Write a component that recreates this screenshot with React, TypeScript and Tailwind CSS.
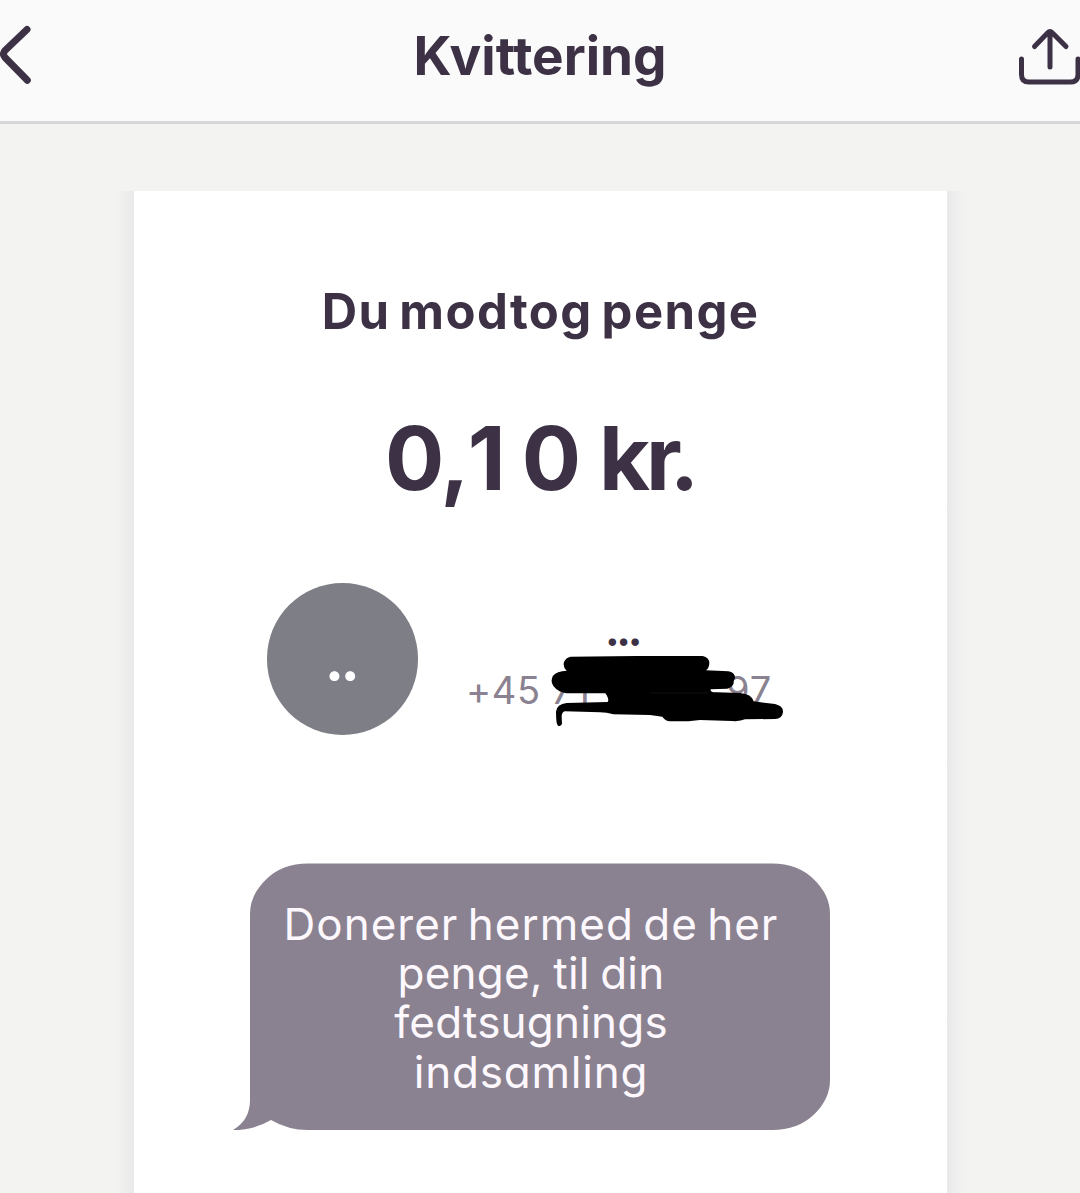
const inter = "font-['Inter',sans-serif] [font-feature-settings:'cv11'] whitespace-nowrap";

function BackIcon() {
  return (
    <svg className="block h-[70px] w-10" viewBox="0 0 40 70" fill="none" stroke="#3d3145" strokeWidth="7" strokeLinecap="round" strokeLinejoin="round">
      <path d="M27 9.500L5 30.500Q2 34 5 37.500L27.300 60.300" />
    </svg>
  );
}

function ShareIcon() {
  return (
    <svg className="block h-[70px] w-[66px]" viewBox="0 0 66 70" fill="none" stroke="#3d3145" strokeWidth="5" strokeLinecap="round" strokeLinejoin="round">
      <path d="M7.500 39V54.500Q7.500 62 15 62H56.500Q64 62 64 54.500V39" />
      <path d="M36 47V12M20.500 26.500L33.500 13Q36 10.500 38.500 13L52 26.500" />
    </svg>
  );
}

function Scribble() {
  return (
    <svg className="absolute -left-[16px] -top-[9px] h-[120px] w-[350px]" viewBox="0 0 1050 360">
      <path d="M362 110L560 108H758Q778 112 778 130Q778 144 768 151L835 154Q856 158 855 174Q850 180 851 190Q847 203 832 206L782 208Q780 218 800 217L870 219Q905 222 911 244L975 252Q1000 258 999 276Q997 296 975 297L885 298Q870 305 845 303L750 300L715 304H660Q645 302 637 290L600 285L490 283Q470 277 450 277L345 274Q335 276 335 290L336 312Q332 320 324 317Q318 313 318 275Q320 252 350 249L473 246Q478 240 470 226L466 220L350 220Q326 218 310 198Q300 184 309 167Q320 154 350 152Q338 142 342 126Q347 113 362 110Z" />
      <path d="M600 219H776" stroke="#353535" strokeWidth="1" />
    </svg>
  );
}

function Bubble() {
  return (
    <div className="relative ml-[116px] mt-[128px] h-[267px] w-[580px] text-center text-[44px] font-normal leading-[49.2px] text-[#fdf8fd]">
      <svg className="absolute -left-[17px] top-0 h-[267px] w-[597px]" viewBox="233 863 597 267" fill="#8a8290">
        <path d="M308 863.500H772Q798 863.500 814 879.500Q830 895 830 914V1080Q830 1099 814 1114.500Q798 1130 772 1130H308Q288 1130 271 1120Q254 1130 233 1130Q250 1120 250 1100V914Q250 895 266 879.500Q282 863.500 308 863.500Z" />
      </svg>
      <div className="relative flex w-[562px] flex-col items-center pt-[37px]">
        <span className="tracking-[1px] [word-spacing:-4px]">Donerer hermed de her</span>
        <span className="tracking-[0.2px] [word-spacing:-2px]">penge, til din</span>
        <span className="tracking-[0.2px]">fedtsugnings</span>
        <span className="tracking-[0.8px]">indsamling</span>
      </div>
    </div>
  );
}

export default function App() {
  return (
    <div className={`h-[1193px] w-[1080px] overflow-hidden bg-[#f3f3f2] text-[#3d3145] ${inter}`}>
      <header className="flex h-[124px] items-start justify-between border-b-[3px] border-[#d7d7da] bg-[#fafafb] pt-5">
        <div className="w-[66px]"><BackIcon /></div>
        <h1 className="text-[53px] font-bold leading-[72px] tracking-[0px]">Kvittering</h1>
        <div className="w-[66px]"><ShareIcon /></div>
      </header>
      <div className="flex pt-[67px]">
        <div className="ml-[116px] h-[1010px] w-[18px] bg-gradient-to-r from-[#f3f3f2] to-[#e9e9e9]" />
        <main className="h-[1010px] w-[813px] bg-white">
          <h2 className="pt-[91px] text-center text-[49px] font-bold leading-[60px] tracking-[1.4px] [word-spacing:-4px]">Du modtog penge</h2>
          <p className="ml-[251px] mt-[66px] text-[88px] font-bold leading-[100px] [word-spacing:-3px]">
            <span className="tracking-[-4px]">0</span>
            <span className="tracking-[-2px]">,</span>
            <span className="tracking-[16px]">1</span>
            <span>0 </span>
            <span className="tracking-[-4px]">k</span>
            <span className="tracking-[-12px]">r</span>
            <span>.</span>
          </p>
          <section className="ml-[133px] mt-[75px] flex h-[152px]">
            <div className="flex h-[152px] w-[151px] justify-center rounded-full bg-[#7d7e86] pt-[46px] pr-[4px] text-[58px] font-bold leading-[60px] tracking-[-3.5px] text-white">..</div>
            <div className="relative ml-12 mt-[36px] w-[320px]">
              <div className="w-[312px] text-center text-[44px] font-bold leading-[22px] tracking-[-3.3px]">...</div>
              <div className="relative mt-[24px] flex text-[38px] font-normal leading-[50px] text-[#8a8290]">
                <span className="w-[85px] tracking-[0.7px]">+45</span>
                <span className="w-[175px] tracking-[2px]">71</span>
                <span className="tracking-[1px]">97</span>
              </div>
              <div className="absolute left-0 top-[10px]"><Scribble /></div>
            </div>
          </section>
          <Bubble />
        </main>
        <div className="h-[1010px] w-[18px] bg-gradient-to-l from-[#f3f3f2] to-[#e9e9e9]" />
      </div>
    </div>
  );
}
